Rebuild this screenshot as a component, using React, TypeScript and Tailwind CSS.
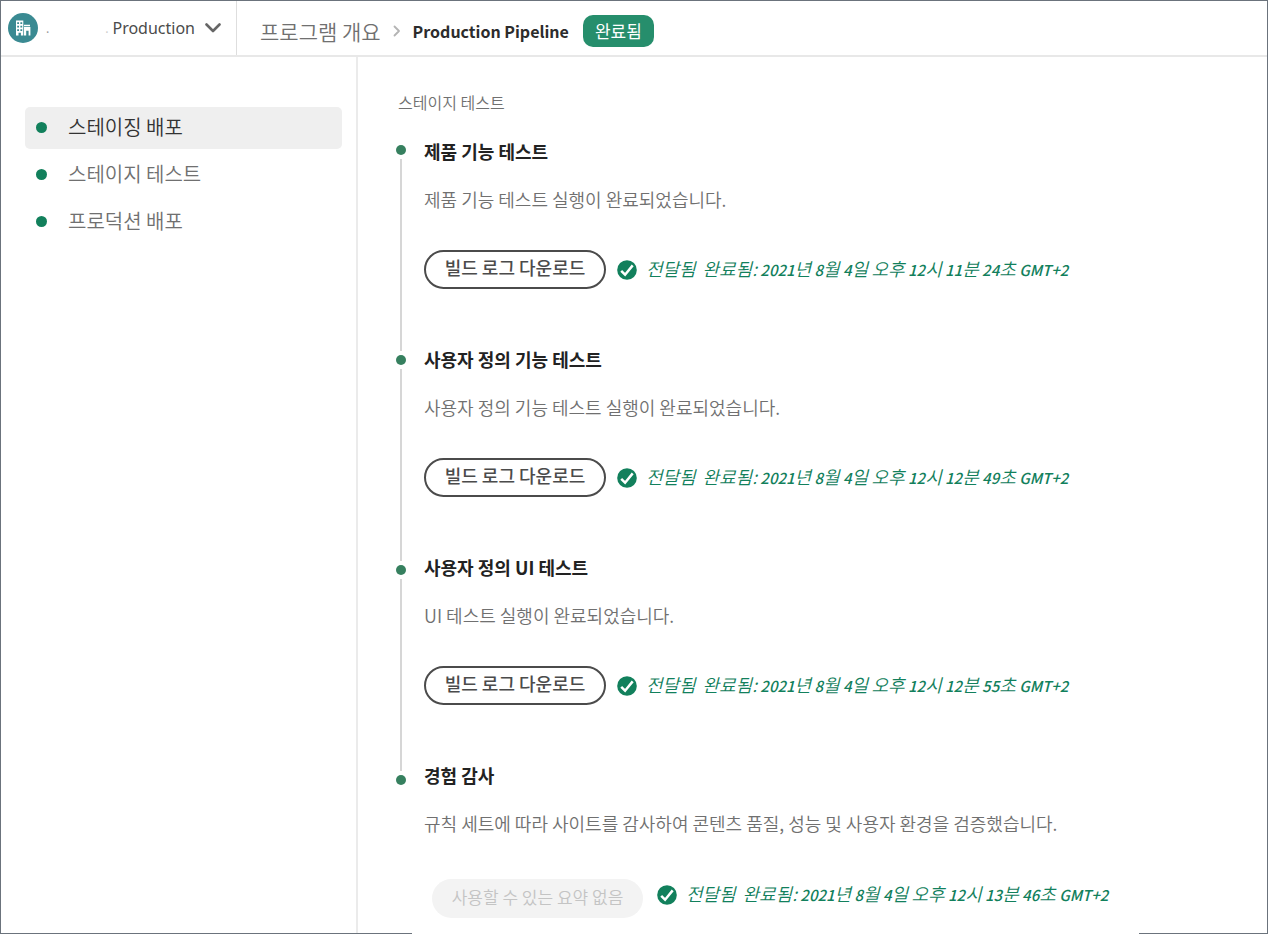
import { Fragment } from 'react';

type Step = {
  title: string;
  description: string;
  finished: string;
};

const navItems = ['스테이징 배포', '스테이지 테스트', '프로덕션 배포'];

const steps: Step[] = [
  {
    title: '제품 기능 테스트',
    description: '제품 기능 테스트 실행이 완료되었습니다.',
    finished: '2021년 8월 4일 오후 12시 11분 24초 GMT+2',
  },
  {
    title: '사용자 정의 기능 테스트',
    description: '사용자 정의 기능 테스트 실행이 완료되었습니다.',
    finished: '2021년 8월 4일 오후 12시 12분 49초 GMT+2',
  },
  {
    title: '사용자 정의 UI 테스트',
    description: 'UI 테스트 실행이 완료되었습니다.',
    finished: '2021년 8월 4일 오후 12시 12분 55초 GMT+2',
  },
];

function ProgramLogo() {
  return (
    <svg viewBox="0 0 30 30" className="size-[30px] shrink-0" aria-hidden="true">
      <circle cx="15" cy="15" r="15" fill="#3a8a92" />
      <path
        fill="#fff"
        fillRule="evenodd"
        d="M8 7.500h7.300v15H12.900v-2.700h-2.400v2.700H8zM9.200 9.200v1.900h1.800V9.200zm3.200 0v1.900h1.800V9.200zM9.200 12.700v1.900h1.800v-1.900zm3.200 0v1.900h1.800v-1.900zM9.200 16.200v1.900h1.800v-1.900zm3.200 0v1.900h1.800v-1.900z"
      />
      <path
        fill="#fff"
        fillRule="evenodd"
        d="M16 11.800h6v1.400H16zM16 14h6.400v8.500h-1.800v-4.700h-2.400v4.700H16z"
      />
    </svg>
  );
}

function CheckBadge() {
  return (
    <svg viewBox="0 0 20 20" className="size-5 shrink-0" aria-hidden="true">
      <circle cx="10" cy="10" r="9.8" fill="#12805c" />
      <path d="M4.200 10.800l3.900 3.900L15.700 5.400" fill="none" stroke="#fff" strokeWidth="2.500" />
    </svg>
  );
}

/* Digits and Latin letters run one size smaller than the Hangul around them. */
function MixedText({ text }: { text: string }) {
  return text.split(/([ ]?[A-Z0-9+]+|[ ]+)/).map((part, i) =>
    i % 2 === 1 ? (
      <span key={i} className="text-[15px] font-medium">{part}</span>
    ) : (
      <Fragment key={i}>{part}</Fragment>
    ),
  );
}

function Status({ finished }: { finished: string }) {
  return (
    <p className="flex items-center gap-[9px] text-[18px] leading-6 text-[#12805c]">
      <CheckBadge />
      <span className="pb-px font-[350] italic whitespace-pre">
        <MixedText text={`전달됨  완료됨: ${finished}`} />
      </span>
    </p>
  );
}

function Rail({ count }: { count: number }) {
  return (
    <div className="flex w-2.5 shrink-0 flex-col items-center gap-1 pt-1.5" aria-hidden="true">
      {Array.from({ length: count }, (_, i) => (
        <Fragment key={i}>
          {i > 0 && <span className="h-48 w-0.5 bg-[#d6d6d6]" />}
          <span className="size-2.5 rounded-full bg-[#36805f]" />
        </Fragment>
      ))}
    </div>
  );
}

export default function App() {
  return (
    <div className="flex min-h-screen flex-col bg-white font-['Noto_Sans_CJK_KR','Noto_Sans',sans-serif] text-[#707070]">
      <div className="flex grow flex-col border-x border-t border-[#6b737c]">
        <header className="flex h-14 border-b-2 border-[#e8e8e8]">
          <div className="flex w-[236px] shrink-0 items-center border-r border-[#dedede] pl-[7px]">
            <ProgramLogo />
            <span className="ml-2 text-[12px] leading-4 text-[#999]">.</span>
            <span className="ml-auto pr-1 text-[12px] leading-4 text-[#ccc]">.</span>
            <button type="button" className="flex items-center gap-2.5 pr-[15px] font-['Noto_Sans',sans-serif] text-[16px] leading-6 text-[#4b4b4b]">
              Production
              <svg viewBox="0 0 16 10" className="h-2.5 w-4" aria-hidden="true">
                <path d="M1.500 1.500L8 8l6.500-6.500" fill="none" stroke="#666" strokeWidth="2.600" strokeLinecap="round" strokeLinejoin="round" />
              </svg>
            </button>
          </div>
          <nav aria-label="Breadcrumb" className="flex items-center pt-1.5 pl-[23px]">
            <a href="#overview" className="text-[21px] leading-7 font-[350]">프로그램 개요</a>
            <svg viewBox="0 0 8 12" className="mx-3 h-3 w-2" aria-hidden="true">
              <path d="M1.500 1.500L6 6l-4.500 4.500" fill="none" stroke="#b4b4b4" strokeWidth="1.800" strokeLinecap="round" strokeLinejoin="round" />
            </svg>
            <h1 className="text-[16px] leading-7 font-bold text-[#2c2c2c]">Production Pipeline</h1>
            <span className="ml-[14px] flex h-8 items-center rounded-[10px] bg-[#268e6c] px-3 text-[17px] leading-6 text-white">완료됨</span>
          </nav>
        </header>

        <div className="flex grow">
          <aside className="w-[357px] shrink-0 border-r-2 border-[#ebebeb] pt-[50px] pr-3.5 pl-6">
            <ul className="flex flex-col gap-[5px]">
              {navItems.map((item, i) => (
                <li key={item}>
                  <a
                    href={`#section-${i + 1}`}
                    className={
                      i === 0
                        ? 'flex h-[42px] items-center gap-[21px] rounded-[5px] bg-[#efefef] pb-0.5 pl-[11px] text-[20px] leading-7 font-[350] text-[#333]'
                        : 'flex h-[42px] items-center gap-[21px] rounded-[5px] pb-0.5 pl-[11px] text-[20px] leading-7 font-[350] text-[#707070]'
                    }
                  >
                    <span className="size-[11px] rounded-full bg-[#12805c]" />
                    {item}
                  </a>
                </li>
              ))}
            </ul>
          </aside>

          <main className="grow pt-[33px] pl-[38px]">
            <h2 className="pl-0.5 text-[16px] leading-6 font-[350]">스테이지 테스트</h2>
            <div className="flex gap-[18px] pt-[25px]">
              <Rail count={steps.length + 1} />
              <div className="flex grow flex-col">
                {steps.map((step) => (
                  <section key={step.title} className="pb-[58px]">
                    <h3 className="text-[18px] leading-6 font-bold text-[#222]">{step.title}</h3>
                    <p className="mt-6 text-[18px] leading-6 font-[350]">{step.description}</p>
                    <div className="mt-[39px] flex items-center gap-[11px]">
                      <button type="button" className="flex h-[39px] w-[182px] items-center justify-center rounded-full border-2 border-[#4b4b4b] pb-1.5 text-[18px] leading-6 font-medium text-[#4b4b4b]">
                        빌드 로그 다운로드
                      </button>
                      <Status finished={step.finished} />
                    </div>
                  </section>
                ))}
                <section className="pb-3">
                  <h3 className="text-[18px] leading-6 font-bold text-[#222]">경험 감사</h3>
                  <p className="mt-6 text-[18px] leading-6 font-[350]">
                    규칙 세트에 따라 사이트를 감사하여 콘텐츠 품질, 성능 및 사용자 환경을 검증했습니다.
                  </p>
                  <div className="mt-11 flex items-start gap-[14px] pl-2">
                    <button type="button" disabled className="flex h-[39px] w-[211px] items-center justify-center rounded-full bg-[#f3f3f3] pb-1 text-[17px] leading-6 font-[350] text-[#c4c4c4]">
                      사용할 수 있는 요약 없음
                    </button>
                    <div className="pt-0.5">
                      <Status finished="2021년 8월 4일 오후 12시 13분 46초 GMT+2" />
                    </div>
                  </div>
                </section>
              </div>
            </div>
          </main>
        </div>
      </div>
      <div className="flex h-px justify-between" aria-hidden="true">
        <span className="w-[412px] bg-[#6b737c]" />
        <span className="w-[129px] bg-[#6b737c]" />
      </div>
    </div>
  );
}
